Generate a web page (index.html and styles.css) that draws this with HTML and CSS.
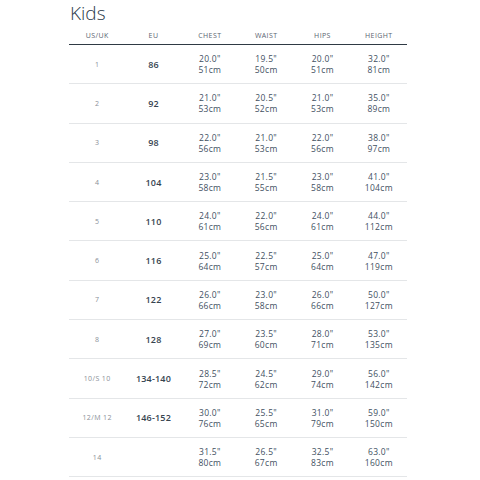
FILE: index.html
```html
<!DOCTYPE html>
<html lang="en">
<head>
<meta charset="utf-8">
<title>Kids size chart</title>
<link rel="stylesheet" href="styles.css">
</head>
<body>
<div class="wrap">
  <h1 class="title">Kids</h1>
  <table class="chart">
    <thead>
      <tr><th>US/UK</th><th>EU</th><th>CHEST</th><th>WAIST</th><th>HIPS</th><th>HEIGHT</th></tr>
    </thead>
    <tbody>
      <tr><td class="us">1</td><td class="eu">86</td><td>20.0"<br>51cm</td><td>19.5"<br>50cm</td><td>20.0"<br>51cm</td><td>32.0"<br>81cm</td></tr>
      <tr><td class="us">2</td><td class="eu">92</td><td>21.0"<br>53cm</td><td>20.5"<br>52cm</td><td>21.0"<br>53cm</td><td>35.0"<br>89cm</td></tr>
      <tr><td class="us">3</td><td class="eu">98</td><td>22.0"<br>56cm</td><td>21.0"<br>53cm</td><td>22.0"<br>56cm</td><td>38.0"<br>97cm</td></tr>
      <tr><td class="us">4</td><td class="eu">104</td><td>23.0"<br>58cm</td><td>21.5"<br>55cm</td><td>23.0"<br>58cm</td><td>41.0"<br>104cm</td></tr>
      <tr><td class="us">5</td><td class="eu">110</td><td>24.0"<br>61cm</td><td>22.0"<br>56cm</td><td>24.0"<br>61cm</td><td>44.0"<br>112cm</td></tr>
      <tr><td class="us">6</td><td class="eu">116</td><td>25.0"<br>64cm</td><td>22.5"<br>57cm</td><td>25.0"<br>64cm</td><td>47.0"<br>119cm</td></tr>
      <tr><td class="us">7</td><td class="eu">122</td><td>26.0"<br>66cm</td><td>23.0"<br>58cm</td><td>26.0"<br>66cm</td><td>50.0"<br>127cm</td></tr>
      <tr><td class="us">8</td><td class="eu">128</td><td>27.0"<br>69cm</td><td>23.5"<br>60cm</td><td>28.0"<br>71cm</td><td>53.0"<br>135cm</td></tr>
      <tr><td class="us">10/S 10</td><td class="eu">134-140</td><td>28.5"<br>72cm</td><td>24.5"<br>62cm</td><td>29.0"<br>74cm</td><td>56.0"<br>142cm</td></tr>
      <tr><td class="us">12/M 12</td><td class="eu">146-152</td><td>30.0"<br>76cm</td><td>25.5"<br>65cm</td><td>31.0"<br>79cm</td><td>59.0"<br>150cm</td></tr>
      <tr><td class="us">14</td><td class="eu"></td><td>31.5"<br>80cm</td><td>26.5"<br>67cm</td><td>32.5"<br>83cm</td><td>63.0"<br>160cm</td></tr>
    </tbody>
  </table>
</div>
</body>
</html>
```

FILE: styles.css
```css
html, body {
  margin: 0;
  padding: 0;
  background: #ffffff;
}
body {
  font-family: "Open Sans", "Liberation Sans", sans-serif;
  color: #3d4b5c;
}
.wrap {
  margin-left: 69px;
  width: 338px;
}
.title {
  margin: 0;
  height: 26px;
  font-size: 19px;
  line-height: 26px;
  font-weight: 300;
  color: #2b3a4a;
  padding-left: 1px;
}
.chart {
  width: 338px;
  border-collapse: collapse;
  table-layout: fixed;
}
.chart th {
  height: 18px;
  padding: 0;
  font-size: 7px;
  font-weight: 400;
  color: #5a6470;
  letter-spacing: 0.4px;
  text-align: center;
  vertical-align: middle;
  border-bottom: 1.5px solid #2f3a44;
}
.chart td {
  height: 39.3px;
  padding: 0;
  box-sizing: border-box;
  font-size: 8.5px;
  line-height: 11px;
  letter-spacing: 0.3px;
  text-align: center;
  vertical-align: middle;
  color: #42505f;
  border-bottom: 1px solid #e4e6e8;
}
.chart td.us {
  font-size: 7px;
  letter-spacing: 0.4px;
  color: #8a9098;
}
.chart td.eu {
  font-size: 9px;
  font-weight: 600;
  letter-spacing: 0.2px;
  color: #36434f;
}
```
